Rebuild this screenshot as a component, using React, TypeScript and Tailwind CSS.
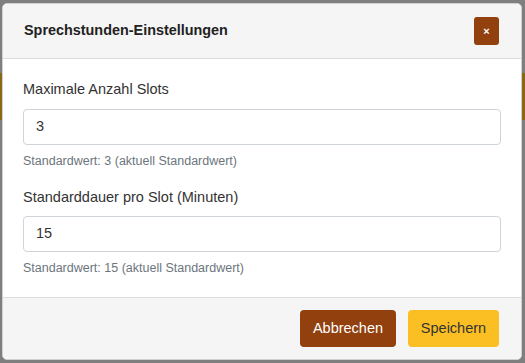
export default function App() {
  return (
    <div className="relative h-[363px] w-[525px] overflow-hidden bg-[#7f7f7f] font-['Liberation_Sans',Arial,sans-serif]">
      {/* darkened page behind the backdrop */}
      <div className="h-[73px]" />
      <div className="h-[47px] bg-[#8a6816]" />

      <div className="absolute left-[2px] top-[3px] flex h-[357px] w-[520px] flex-col overflow-hidden rounded-[5px] border border-[#d0d0d0] bg-white">
        <header className="flex h-[55px] items-center justify-between border-b border-[#dcdcdc] bg-[#f5f5f5] pl-[21px] pr-[22px]">
          <h2 className="text-[14.4px] font-bold text-[#222]">Sprechstunden-Einstellungen</h2>
          <button className="flex h-[28px] w-[25px] items-center justify-center rounded-[3px] bg-[#92400e] text-[11px] font-bold leading-none text-white">
            ×
          </button>
        </header>

        <main className="flex-1 px-[20px] pt-[20px]">
          <label className="block text-[14.5px] text-[#333]">Maximale Anzahl Slots</label>
          <div className="mt-[8px] flex h-[36px] items-center rounded-[4px] border border-[#cfd4da] px-[12px] text-[14.5px] text-[#333]">
            3
          </div>
          <p className="mt-[7px] text-[12.5px] text-[#6c757d]">Standardwert: 3 (aktuell Standardwert)</p>

          <label className="mt-[16px] block text-[14.5px] text-[#333]">Standarddauer pro Slot (Minuten)</label>
          <div className="mt-[8px] flex h-[36px] items-center rounded-[4px] border border-[#cfd4da] px-[12px] text-[14.5px] text-[#333]">
            15
          </div>
          <p className="mt-[7px] text-[12.5px] text-[#6c757d]">Standardwert: 15 (aktuell Standardwert)</p>
        </main>

        <footer className="flex h-[62px] items-center justify-end gap-[12px] border-t border-[#dcdcdc] bg-[#f5f5f5] pr-[22px]">
          <button className="h-[37px] w-[96px] rounded-[4px] bg-[#92400e] text-[14.5px] text-white">Abbrechen</button>
          <button className="h-[37px] w-[91px] rounded-[4px] bg-[#fbbf24] text-[14.5px] text-[#333]">Speichern</button>
        </footer>
      </div>
    </div>
  );
}
